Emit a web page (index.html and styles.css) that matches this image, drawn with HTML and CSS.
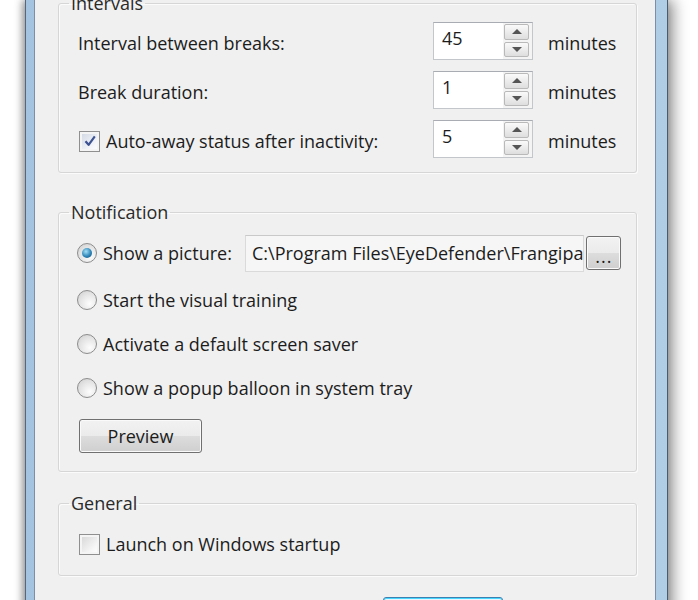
FILE: index.html
```html
<!DOCTYPE html>
<html lang="en">
<head>
  <meta charset="UTF-8">
  <title>EyeDefender Settings</title>
  <link rel="stylesheet" href="styles.css">
</head>
<body>

<div class="window">
  <div class="client">

    <fieldset class="group group-intervals">
      <legend>Intervals</legend>
      <div class="interval-grid">
        <span class="field-label">Interval between breaks:</span>
        <div class="spin">
          <span class="spin-value">45</span>
          <span class="spin-buttons"><span class="spin-btn"><i class="arrow-up"></i></span><span class="spin-btn"><i class="arrow-down"></i></span></span>
        </div>
        <span class="unit">minutes</span>

        <span class="field-label">Break duration:</span>
        <div class="spin">
          <span class="spin-value">1</span>
          <span class="spin-buttons"><span class="spin-btn"><i class="arrow-up"></i></span><span class="spin-btn"><i class="arrow-down"></i></span></span>
        </div>
        <span class="unit">minutes</span>

        <label class="check-row">
          <span class="checkbox checked">
            <svg width="14" height="14" viewBox="0 0 14 14"><path d="M2.5 7.2 L5.6 10.8 L11.8 2.4" fill="none" stroke="#3d5291" stroke-width="2.2" stroke-linejoin="round"/></svg>
          </span>
          Auto-away status after inactivity:
        </label>
        <div class="spin">
          <span class="spin-value">5</span>
          <span class="spin-buttons"><span class="spin-btn"><i class="arrow-up"></i></span><span class="spin-btn"><i class="arrow-down"></i></span></span>
        </div>
        <span class="unit">minutes</span>
      </div>
    </fieldset>

    <fieldset class="group group-notify">
      <legend>Notification</legend>
      <div class="picture-row">
        <label class="radio-row picture-label"><span class="radio checked"></span>Show a picture:</label>
        <div class="path-field">C:\Program Files\EyeDefender\Frangipa</div>
        <button class="btn browse-btn">...</button>
      </div>
      <label class="radio-row option"><span class="radio"></span>Start the visual training</label>
      <label class="radio-row option"><span class="radio"></span>Activate a default screen saver</label>
      <label class="radio-row option"><span class="radio"></span>Show a popup balloon in system tray</label>
      <button class="btn preview-btn">Preview</button>
    </fieldset>

    <fieldset class="group group-general">
      <legend>General</legend>
      <label class="check-row startup"><span class="checkbox"></span>Launch on Windows startup</label>
    </fieldset>

    <div class="dialog-buttons">
      <button class="btn default-btn" aria-label="OK"></button>
    </div>

  </div>
</div>

</body>
</html>
```

FILE: styles.css
```css
* { box-sizing: border-box; }
body {
  margin: 0;
  height: 600px;
  overflow: hidden;
  background: #fff;
  font-family: 'Open Sans', 'Noto Sans', sans-serif;
  font-size: 18px;
  color: #1c1c1c;
}
.window {
  width: 643px;
  height: 640px;
  margin-left: 25px;
  display: flex;
  padding: 0 11px 0 8px;
  border-left: 1px solid #56677a;
  border-right: 1px solid #4c5b6b;
  background: linear-gradient(90deg, #a3c3e0, #c4dcf0 40%, #b0cde6);
  box-shadow: 5px 0 14px rgba(0, 0, 0, 0.45), -3px 0 7px rgba(0, 0, 0, 0.3);
}
.client {
  width: 622px;
  background: #f0f0f0;
  border-left: 1px solid #7d8fa3;
  border-right: 1px solid #7d8fa3;
  padding: 0 18px 0 23px;
}

/* group boxes */
.group {
  margin: 0;
  border: 1px solid #d6d6d6;
  border-radius: 3px;
  box-shadow: inset 1px 1px 0 #fbfbfb, 1px 1px 0 #fbfbfb;
  padding: 0 15px 0 19px;
}
.group legend {
  margin-left: -9px;
  padding: 0 2px;
  line-height: 22px;
  color: #2a2a2a;
}
.group-intervals {
  margin-top: -8px;
  padding-top: 8px;
  padding-bottom: 14px;
}
.group-notify {
  margin-top: 28px;
  padding-top: 11px;
  padding-bottom: 18px;
}
.group-general {
  margin-top: 20px;
  padding-top: 18px;
  padding-bottom: 19px;
}

/* intervals */
.interval-grid {
  display: grid;
  grid-template-columns: 355px 100px auto;
  grid-auto-rows: 38px;
  row-gap: 11px;
  align-items: center;
}
.interval-grid > .field-label,
.interval-grid > .unit,
.interval-grid > .check-row {
  padding-top: 4px;
}
.unit {
  margin-left: 15px;
}
.spin {
  height: 38px;
  display: flex;
  background: #fff;
  border: 1px solid #c3c6cb;
  border-top-color: #a9acb2;
}
.spin-value {
  flex: 1;
  padding: 4px 0 0 8px;
  line-height: 22px;
}
.spin-buttons {
  width: 29px;
  display: flex;
  flex-direction: column;
  gap: 2px;
  padding: 1px 3px 2px 1px;
  background: #f4f4f4;
}
.spin-btn {
  flex: 1;
  display: flex;
  align-items: center;
  justify-content: center;
  border: 1px solid #b9b9b9;
  border-radius: 2px;
  background: linear-gradient(#fafafa, #ececec 50%, #dedede);
}
.arrow-up, .arrow-down {
  width: 0;
  height: 0;
  border-left: 5px solid transparent;
  border-right: 5px solid transparent;
}
.arrow-up { border-bottom: 5px solid #555; }
.arrow-down { border-top: 5px solid #555; }

/* checkboxes and radios */
.check-row, .radio-row {
  display: flex;
  align-items: center;
}
.checkbox {
  width: 21px;
  height: 21px;
  margin: 0 6px 0 1px;
  border: 1px solid #8f8f8f;
  display: flex;
  align-items: center;
  justify-content: center;
  background: linear-gradient(135deg, #d4d4d4, #f6f6f6 70%, #fff);
  box-shadow: inset 0 0 0 2px #f4f4f4;
}
.checkbox.checked {
  background: linear-gradient(135deg, #cfd6e2, #f3f5f9 70%, #fff);
}
.radio {
  width: 20px;
  height: 20px;
  margin: 0 6px 0 -1px;
  border-radius: 50%;
  border: 1px solid #8c8c8c;
  background: radial-gradient(circle at 65% 70%, #fdfdfd, #e2e2e2 60%, #cacaca);
  display: flex;
  align-items: center;
  justify-content: center;
}
.radio.checked::after {
  content: "";
  width: 10px;
  height: 10px;
  border-radius: 50%;
  background: radial-gradient(circle at 40% 35%, #a4e0f7, #2f86b8 55%, #134a74);
}

/* notification */
.picture-row {
  display: flex;
  align-items: center;
  height: 38px;
}
.picture-label {
  width: 167px;
}
.path-field {
  flex: 1;
  height: 37px;
  padding: 5px 0 0 6px;
  white-space: nowrap;
  overflow: hidden;
  background: #f6f6f6;
  border: 1px solid #dadada;
  border-top-color: #c9c9c9;
}
.btn {
  font-family: inherit;
  font-size: 18px;
  color: #1c1c1c;
  border: 1px solid #707070;
  border-radius: 3px;
  background: linear-gradient(#f2f2f2, #ebebeb 49%, #dddddd 50%, #cfcfcf);
  box-shadow: inset 0 0 0 1px #fafafa;
  padding: 0;
}
.browse-btn {
  width: 35px;
  height: 34px;
  margin-left: 2px;
  padding-top: 6px;
  line-height: 20px;
  letter-spacing: 1px;
}
.option {
  height: 44px;
}
.picture-row + .option {
  margin-top: 6px;
}
.preview-btn {
  display: block;
  width: 123px;
  height: 34px;
  margin: 9px 0 0 1px;
}

/* general */
.startup {
  height: 24px;
}

.dialog-buttons {
  display: flex;
  padding-left: 325px;
  margin-top: 21px;
}
.default-btn {
  width: 120px;
  height: 34px;
  border-color: #3c7fb1;
  box-shadow: inset 0 0 0 1px #48d7ff;
  background: linear-gradient(#eaf6fd, #d9f0fc 49%, #bee6fd 50%, #a7d9f5);
}
```
